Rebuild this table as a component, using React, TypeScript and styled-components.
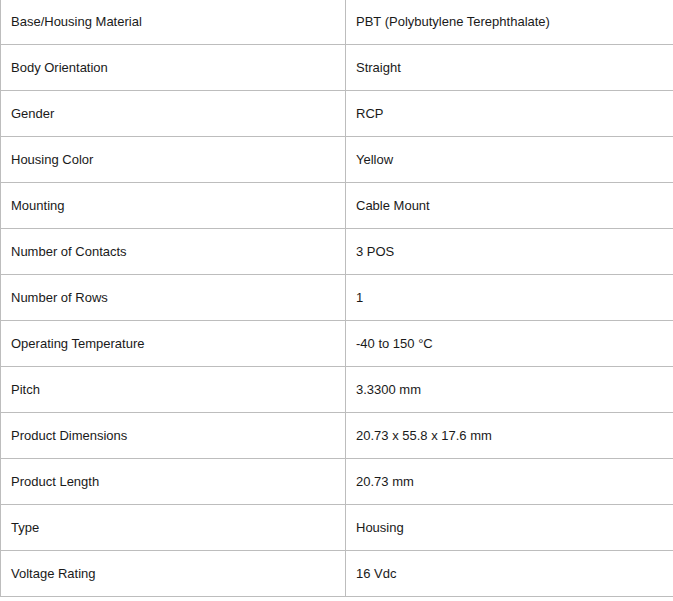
import styled, { createGlobalStyle } from 'styled-components'

const specs: [string, string][] = [
  ['Base/Housing Material', 'PBT (Polybutylene Terephthalate)'],
  ['Body Orientation', 'Straight'],
  ['Gender', 'RCP'],
  ['Housing Color', 'Yellow'],
  ['Mounting', 'Cable Mount'],
  ['Number of Contacts', '3 POS'],
  ['Number of Rows', '1'],
  ['Operating Temperature', '-40 to 150 °C'],
  ['Pitch', '3.3300 mm'],
  ['Product Dimensions', '20.73 x 55.8 x 17.6 mm'],
  ['Product Length', '20.73 mm'],
  ['Type', 'Housing'],
  ['Voltage Rating', '16 Vdc'],
]

const GlobalStyle = createGlobalStyle`
  html, body {
    margin: 0;
    background: #fff;
    overflow: hidden;
  }
`

const Page = styled.div`
  width: 673px;
  height: 601px;
  overflow: hidden;
`

const Table = styled.table`
  width: 674px;
  margin-top: -2px;
  border-collapse: collapse;
  table-layout: fixed;
  font-family: 'Liberation Sans', Arial, sans-serif;
  font-size: 13px;
  color: #1a1a1a;
`

const Cell = styled.td`
  height: 46px;
  padding: 0 10px;
  border: 1px solid #bdbdbd;
  vertical-align: middle;
  box-sizing: border-box;
`

export default function App() {
  return (
    <Page>
      <GlobalStyle />
      <Table>
        <colgroup>
          <col style={{ width: 345 }} />
          <col />
        </colgroup>
        <tbody>
          {specs.map(([label, value]) => (
            <tr key={label}>
              <Cell>{label}</Cell>
              <Cell>{value}</Cell>
            </tr>
          ))}
        </tbody>
      </Table>
    </Page>
  )
}
